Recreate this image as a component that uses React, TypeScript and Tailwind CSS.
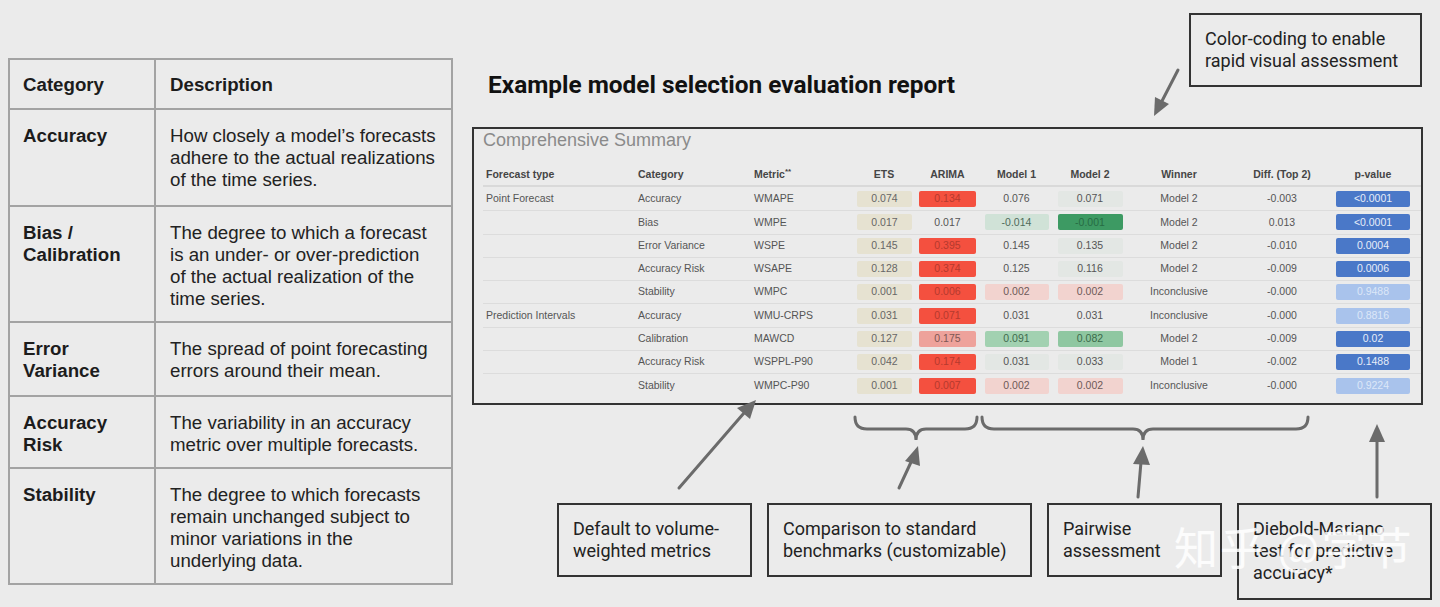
import React from 'react';

type Tone = 'none' | 'red' | 'lred' | 'faint' | 'lgreen' | 'green' | 'mgreen' | 'mgreen2' | 'pink' | 'dark' | 'light';
type Cell = [string, Tone];

interface Row {
  type: string;
  category: string;
  metric: string;
  ets: string;
  arima: Cell;
  m1: Cell;
  m2: Cell;
  winner: string;
  diff: string;
  p: Cell;
}

const categories = [
  { name: ['Accuracy'], desc: ["How closely a model’s forecasts", 'adhere to the actual realizations', 'of the time series.'], h: 'h-[97px]' },
  { name: ['Bias /', 'Calibration'], desc: ['The degree to which a forecast', 'is an under- or over-prediction', 'of the actual realization of the', 'time series.'], h: 'h-[116px]' },
  { name: ['Error', 'Variance'], desc: ['The spread of point forecasting', 'errors around their mean.'], h: 'h-[74px]' },
  { name: ['Accuracy', 'Risk'], desc: ['The variability in an accuracy', 'metric over multiple forecasts.'], h: 'h-[72px]' },
  { name: ['Stability'], desc: ['The degree to which forecasts', 'remain unchanged subject to', 'minor variations in the', 'underlying data.'], h: 'h-[116px]' },
];

const rows: Row[] = [
  { type: 'Point Forecast', category: 'Accuracy', metric: 'WMAPE', ets: '0.074', arima: ['0.134', 'red'], m1: ['0.076', 'none'], m2: ['0.071', 'faint'], winner: 'Model 2', diff: '-0.003', p: ['<0.0001', 'dark'] },
  { type: '', category: 'Bias', metric: 'WMPE', ets: '0.017', arima: ['0.017', 'none'], m1: ['-0.014', 'lgreen'], m2: ['-0.001', 'green'], winner: 'Model 2', diff: '0.013', p: ['<0.0001', 'dark'] },
  { type: '', category: 'Error Variance', metric: 'WSPE', ets: '0.145', arima: ['0.395', 'red'], m1: ['0.145', 'none'], m2: ['0.135', 'faint'], winner: 'Model 2', diff: '-0.010', p: ['0.0004', 'dark'] },
  { type: '', category: 'Accuracy Risk', metric: 'WSAPE', ets: '0.128', arima: ['0.374', 'red'], m1: ['0.125', 'none'], m2: ['0.116', 'faint'], winner: 'Model 2', diff: '-0.009', p: ['0.0006', 'dark'] },
  { type: '', category: 'Stability', metric: 'WMPC', ets: '0.001', arima: ['0.006', 'red'], m1: ['0.002', 'pink'], m2: ['0.002', 'pink'], winner: 'Inconclusive', diff: '-0.000', p: ['0.9488', 'light'] },
  { type: 'Prediction Intervals', category: 'Accuracy', metric: 'WMU-CRPS', ets: '0.031', arima: ['0.071', 'red'], m1: ['0.031', 'none'], m2: ['0.031', 'none'], winner: 'Inconclusive', diff: '-0.000', p: ['0.8816', 'light'] },
  { type: '', category: 'Calibration', metric: 'MAWCD', ets: '0.127', arima: ['0.175', 'lred'], m1: ['0.091', 'mgreen'], m2: ['0.082', 'mgreen2'], winner: 'Model 2', diff: '-0.009', p: ['0.02', 'dark'] },
  { type: '', category: 'Accuracy Risk', metric: 'WSPPL-P90', ets: '0.042', arima: ['0.174', 'red'], m1: ['0.031', 'faint'], m2: ['0.033', 'faint'], winner: 'Model 1', diff: '-0.002', p: ['0.1488', 'dark'] },
  { type: '', category: 'Stability', metric: 'WMPC-P90', ets: '0.001', arima: ['0.007', 'red'], m1: ['0.002', 'pink'], m2: ['0.002', 'pink'], winner: 'Inconclusive', diff: '-0.000', p: ['0.9224', 'light'] },
];

const toneClass: Record<Tone, string> = {
  none: 'text-[#555]',
  red: 'bg-[#f4503f] text-[#b53a2e]',
  lred: 'bg-[#eea29b] text-[#7d5753]',
  faint: 'bg-[#e3e7e4] text-[#555]',
  lgreen: 'bg-[#d0e2d7] text-[#4f6b5b]',
  green: 'bg-[#3d9a63] text-[#276c43]',
  mgreen: 'bg-[#a2d1b1] text-[#3f6b4e]',
  mgreen2: 'bg-[#8fc7a1] text-[#3b6a4a]',
  pink: 'bg-[#f2d3cf] text-[#6e5a58]',
  dark: 'bg-[#4a78c8] text-[#e6edf9]',
  light: 'bg-[#a9c3ec] text-[#dce7f8]',
};

const ValueCell = ({ cell, w }: { cell: Cell; w: string }) => (
  <div className="flex items-center justify-center">
    <div className={`${w} h-[16px] rounded-[2px] flex items-center justify-center ${toneClass[cell[1]]}`}>{cell[0]}</div>
  </div>
);

const gridCols = 'grid grid-cols-[150px_117px_103px_62px_65px_73px_74px_104px_102px_80px]';

const Callout = ({ lines, className }: { lines: string[]; className: string }) => (
  <div className={`border-2 border-[#333] pl-[14px] pt-[13px] text-[18px] leading-[22px] text-[#222] ${className}`}>
    {lines.map((l) => (
      <div key={l}>{l}</div>
    ))}
  </div>
);

export default function App() {
  return (
    <div
      className="relative w-[1440px] h-[607px] overflow-hidden bg-[#ebebeb] flex"
      style={{ fontFamily: 'Roboto, "Liberation Sans", sans-serif' }}
    >
      {/* left: category table */}
      <div className="w-[472px] pl-[8px] pt-[58px]" style={{ fontFamily: '"Liberation Sans", Arial, sans-serif' }}>
        <div className="w-[445px] border-2 border-[#a3a3a3] text-[18.7px] leading-[22px] text-[#1c1c1c]">
          <div className="flex h-[48px]">
            <div className="w-[146px] border-r-2 border-[#a3a3a3] pl-[13px] pt-[14px] font-bold">Category</div>
            <div className="flex-1 pl-[14px] pt-[14px] font-bold">Description</div>
          </div>
          {categories.map((c) => (
            <div key={c.name.join()} className={`flex border-t-2 border-[#a3a3a3] ${c.h}`}>
              <div className="w-[146px] border-r-2 border-[#a3a3a3] pl-[13px] pt-[15px] font-bold">
                {c.name.map((n) => (
                  <div key={n}>{n}</div>
                ))}
              </div>
              <div className="flex-1 pl-[14px] pt-[15px] text-[#222]">
                {c.desc.map((d) => (
                  <div key={d}>{d}</div>
                ))}
              </div>
            </div>
          ))}
        </div>
      </div>

      {/* right: report */}
      <div className="w-[968px] flex flex-col">
        <div className="h-[127px] flex">
          <div className="pl-[16px] pt-[71px] text-[24.4px] leading-[28px] font-bold text-[#111]">
            Example model selection evaluation report
          </div>
          <Callout
            lines={['Color-coding to enable', 'rapid visual assessment']}
            className="ml-auto mr-[18px] mt-[13px] w-[233px] h-[74px]"
          />
        </div>

        <div
          className="w-[951px] h-[278px] border-2 border-[#333] pl-[9px]"
          style={{ fontFamily: '"Liberation Sans", Arial, sans-serif' }}
        >
          <div className="text-[18px] leading-[22px] text-[#8a8a8a]">Comprehensive Summary</div>
          <div className="mt-[14px] text-[10.5px] text-[#555]">
            <div className={`${gridCols} h-[22px] items-center border-b-2 border-[#d9d9d9] font-bold text-[#454545]`}>
              <div className="pl-[3px]">Forecast type</div>
              <div className="pl-[5px]">Category</div>
              <div className="pl-[4px]">
                Metric<sup className="text-[8px]">**</sup>
              </div>
              <div className="text-center">ETS</div>
              <div className="text-center">ARIMA</div>
              <div className="text-center">Model 1</div>
              <div className="text-center">Model 2</div>
              <div className="text-center">Winner</div>
              <div className="text-center">Diff. (Top 2)</div>
              <div className="text-center">p-value</div>
            </div>
            {rows.map((r, i) => (
              <div
                key={i}
                className={`${gridCols} h-[23.3px] items-center ${i > 0 ? 'border-t border-[#dcdcdc]' : ''}`}
              >
                <div className="pl-[3px]">{r.type}</div>
                <div className="pl-[5px]">{r.category}</div>
                <div className="pl-[4px]">{r.metric}</div>
                <div className="flex items-center pl-[4px]">
                  <div className="w-[55px] h-[16px] rounded-[2px] bg-[#e6e2d1] text-[#666] flex items-center justify-center">
                    {r.ets}
                  </div>
                </div>
                <ValueCell cell={r.arima} w="w-[57px]" />
                <ValueCell cell={r.m1} w="w-[64px]" />
                <ValueCell cell={r.m2} w="w-[65px]" />
                <div className="text-center">{r.winner}</div>
                <div className="text-center">{r.diff}</div>
                <ValueCell cell={r.p} w="w-[74px]" />
              </div>
            ))}
          </div>
        </div>

        <div className="mt-[98px] pl-[85px] flex gap-[15px] items-start">
          <Callout lines={['Default to volume-', 'weighted metrics']} className="w-[195px] h-[74px]" />
          <Callout lines={['Comparison to standard', 'benchmarks (customizable)']} className="w-[265px] h-[74px]" />
          <Callout lines={['Pairwise', 'assessment']} className="w-[175px] h-[74px]" />
          <Callout lines={['Diebold-Mariano', 'test for predictive', 'accuracy*']} className="w-[195px] h-[97px]" />
        </div>
      </div>

      {/* arrows and braces */}
      <svg className="absolute inset-0 pointer-events-none" width="1440" height="607" viewBox="0 0 1440 607">
        <g stroke="#6b6b6b" strokeWidth="3" fill="none" strokeLinecap="round">
          <line x1="1178" y1="70" x2="1162" y2="101" />
          <line x1="679" y1="488" x2="744" y2="413" />
          <line x1="899" y1="488" x2="912" y2="460" />
          <line x1="1138" y1="497" x2="1141" y2="462" />
          <line x1="1377" y1="497" x2="1377" y2="440" />
          <path d="M855 417 Q855 429 867 429 L906 429 Q916 429 916 440 Q916 429 926 429 L965 429 Q977 429 977 417" />
          <path d="M982 417 Q982 429 994 429 L1133 429 Q1143 429 1143 440 Q1143 429 1153 429 L1296 429 Q1308 429 1308 417" />
        </g>
        <g fill="#6b6b6b">
          <polygon points="1154,116 1155,97 1169,104" />
          <polygon points="756,400 737,408 750,419" />
          <polygon points="918,446 905,461 920,466" />
          <polygon points="1143,446 1133,464 1150,465" />
          <polygon points="1377,424 1369,442 1385,442" />
        </g>
      </svg>

      {/* watermark */}
      <div
        className="absolute left-[1174px] top-[518px] text-[44px] leading-[56px] text-white/85 tracking-[2px] pointer-events-none"
        style={{ fontFamily: '"Noto Sans CJK SC", sans-serif' }}
      >
        知乎 @字节
      </div>
    </div>
  );
}
